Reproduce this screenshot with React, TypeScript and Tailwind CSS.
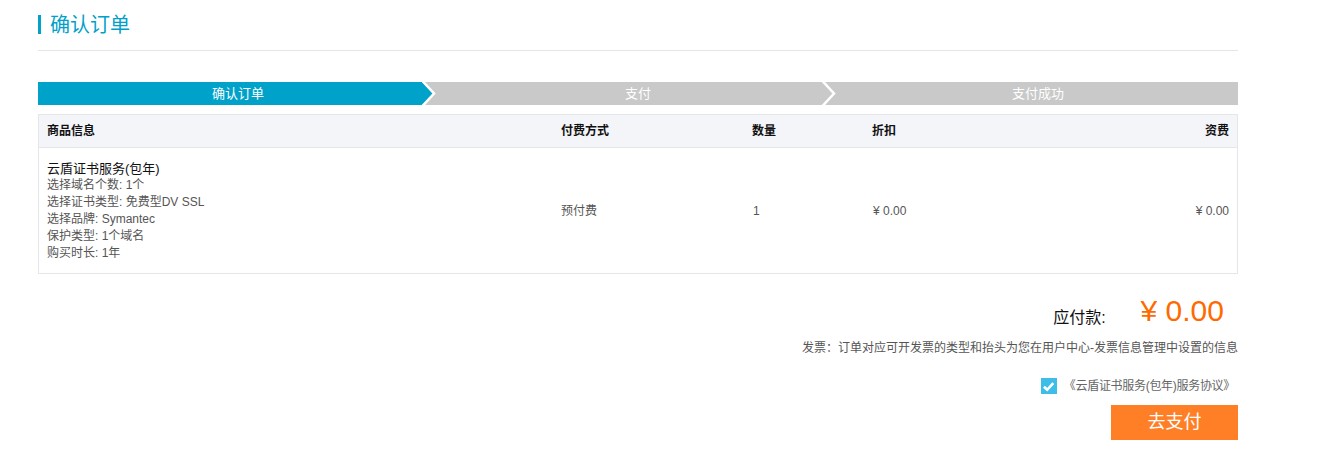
import React from 'react';

const font = { fontFamily: '"Liberation Sans", Arial, "Noto Sans CJK SC", sans-serif' };

const steps = [
  { label: '确认订单', active: true },
  { label: '支付', active: false },
  { label: '支付成功', active: false },
];

function Chevron({ from, to }: { from: string; to: string }) {
  return (
    <svg className="absolute right-0 top-0 h-full w-[18px]" viewBox="0 0 18 23" preserveAspectRatio="none">
      <rect x="0" y="0" width="18" height="23" fill={to} />
      <polygon points="0,0 2,0 13,11.5 2,23 0,23" fill={from} />
      <polyline points="2.5,-1 14,11.5 2.5,24" fill="none" stroke="#ffffff" strokeWidth="2.5" />
    </svg>
  );
}

export default function App() {
  return (
    <div className="min-h-[454px] w-full bg-white text-[12px] text-[#333]" style={font}>
      <div className="ml-[38px] w-[1200px]">
        {/* page title */}
        <div className="flex h-[51px] items-center border-b border-[#e6e6e6] pb-[1px]">
          <span className="mr-[9px] h-[19px] w-[3px] bg-[#00a2ca]" />
          <h1 className="text-[20px] leading-[22px] text-[#00a0c9]">确认订单</h1>
        </div>

        {/* steps */}
        <div className="mt-[31px] flex h-[23px]">
          {steps.map((s, i) => {
            const bg = s.active ? '#00a2ca' : '#c9c9c9';
            const next = i < steps.length - 1 ? (steps[i + 1].active ? '#00a2ca' : '#c9c9c9') : null;
            return (
              <div
                key={s.label}
                className={`relative flex flex-1 items-center justify-center text-[13px] text-white ${s.active ? 'bg-[#00a2ca]' : 'bg-[#c9c9c9]'}`}
              >
                {s.label}
                {next && <Chevron from={bg} to={next} />}
              </div>
            );
          })}
        </div>

        {/* order table */}
        <div className="mt-[9px] border border-[#e4e6ea]">
          <div className="flex h-[33px] items-center border-b border-[#e4e6ea] bg-[#f4f5f9] text-[12px] font-bold text-[#111]">
            <div className="w-[513px] pl-[8px]">商品信息</div>
            <div className="w-[191px] pl-[9px]">付费方式</div>
            <div className="w-[120px] pl-[9px]">数量</div>
            <div className="w-[120px] pl-[9px]">折扣</div>
            <div className="flex-1 pr-[8px] text-right">资费</div>
          </div>
          <div className="flex h-[125px] items-center text-[12px] text-[#555]">
            <div className="w-[513px] pl-[8px] pt-[1px] leading-[17px]">
              <div className="text-[13px] leading-[16px] text-[#111]">云盾证书服务(包年)</div>
              <div>选择域名个数: 1个</div>
              <div>选择证书类型: 免费型DV SSL</div>
              <div>选择品牌: Symantec</div>
              <div>保护类型: 1个域名</div>
              <div>购买时长: 1年</div>
            </div>
            <div className="w-[191px] pl-[9px]">预付费</div>
            <div className="w-[120px] pl-[10px]">1</div>
            <div className="w-[120px] pl-[10px]">¥ 0.00</div>
            <div className="flex-1 pr-[8px] text-right">¥ 0.00</div>
          </div>
        </div>

        {/* total */}
        <div className="mt-[19px] flex items-end justify-end pr-[14px]">
          <span className="mb-[-1px] text-[16px] text-[#111]">应付款:</span>
          <span className="ml-[35px] text-[30px] leading-[36px] text-[#ff6a00]">¥ 0.00</span>
        </div>
        <div className="mt-[10px] text-right text-[12px] text-[#555]">
          发票：订单对应可开发票的类型和抬头为您在用户中心-发票信息管理中设置的信息
        </div>

        {/* agreement */}
        <div className="mt-[20px] flex items-center justify-end pr-[3px]">
          <span className="flex h-[16px] w-[16px] items-center justify-center bg-[#3dbde7]">
            <svg width="13" height="13" viewBox="0 0 12 12">
              <polyline points="1.8,6.2 4.8,9 10.4,2.8" fill="none" stroke="#ffffff" strokeWidth="2.4" />
            </svg>
          </span>
          <span className="ml-[7px] text-[12px] tracking-[-0.3px] text-[#666]">《云盾证书服务(包年)服务协议》</span>
        </div>

        <div className="mt-[10px] flex justify-end">
          <button className="h-[35px] w-[127px] bg-[#ff7f27] text-[18px] text-white">去支付</button>
        </div>
      </div>
    </div>
  );
}
